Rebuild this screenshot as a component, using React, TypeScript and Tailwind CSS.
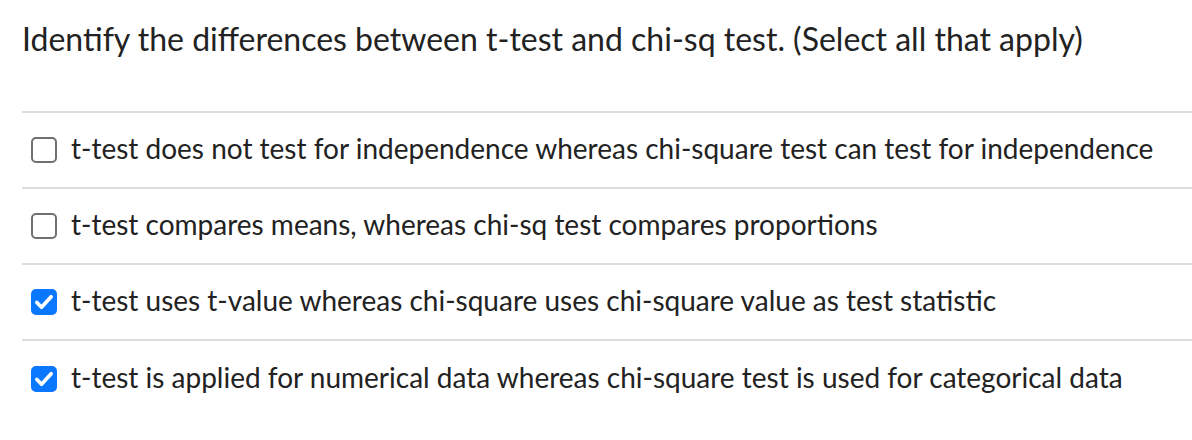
const options = [
  { label: 't-test does not test for independence whereas chi-square test can test for independence', checked: false },
  { label: 't-test compares means, whereas chi-sq test compares proportions', checked: false },
  { label: 't-test uses t-value whereas chi-square uses chi-square value as test statistic', checked: true },
  { label: 't-test is applied for numerical data whereas chi-square test is used for categorical data', checked: true },
];

function Box({ checked }: { checked: boolean }) {
  return (
    <span
      className={
        checked
          ? 'flex h-[26px] w-[26px] shrink-0 items-center justify-center rounded-[5px] border-2 border-[#0a77ff] bg-[#0a77ff]'
          : 'flex h-[26px] w-[26px] shrink-0 items-center justify-center rounded-[5px] border-2 border-[#707070] bg-white'
      }
    >
      {checked && (
        <svg width="22" height="22" viewBox="0 0 16 16" fill="none">
          <path d="M2.8 8.4L6.2 11.8L13.2 4.2" stroke="white" strokeWidth="2.7" strokeLinecap="round" strokeLinejoin="round" />
        </svg>
      )}
    </span>
  );
}

export default function App() {
  return (
    <div className="min-h-[440px] w-[1192px] bg-white" style={{ fontFamily: 'Lato, sans-serif' }}>
      <h1 className="pl-[22px] pt-[19px] text-[32px] leading-[40px] font-normal text-[#222]">
        Identify the differences between t-test and chi-sq test. (Select all that apply)
      </h1>
      <div className="ml-[22px] mt-[52px] border-t-2 border-[#dddddd]">
        {options.map((o) => (
          <label key={o.label} className="flex h-[76px] items-center gap-[14px] border-b-2 border-[#dddddd] pl-[9px] last:border-b-0">
            <Box checked={o.checked} />
            <span className="mb-[4px] text-[28px] leading-[36px] text-[#222]">{o.label}</span>
          </label>
        ))}
      </div>
    </div>
  );
}
